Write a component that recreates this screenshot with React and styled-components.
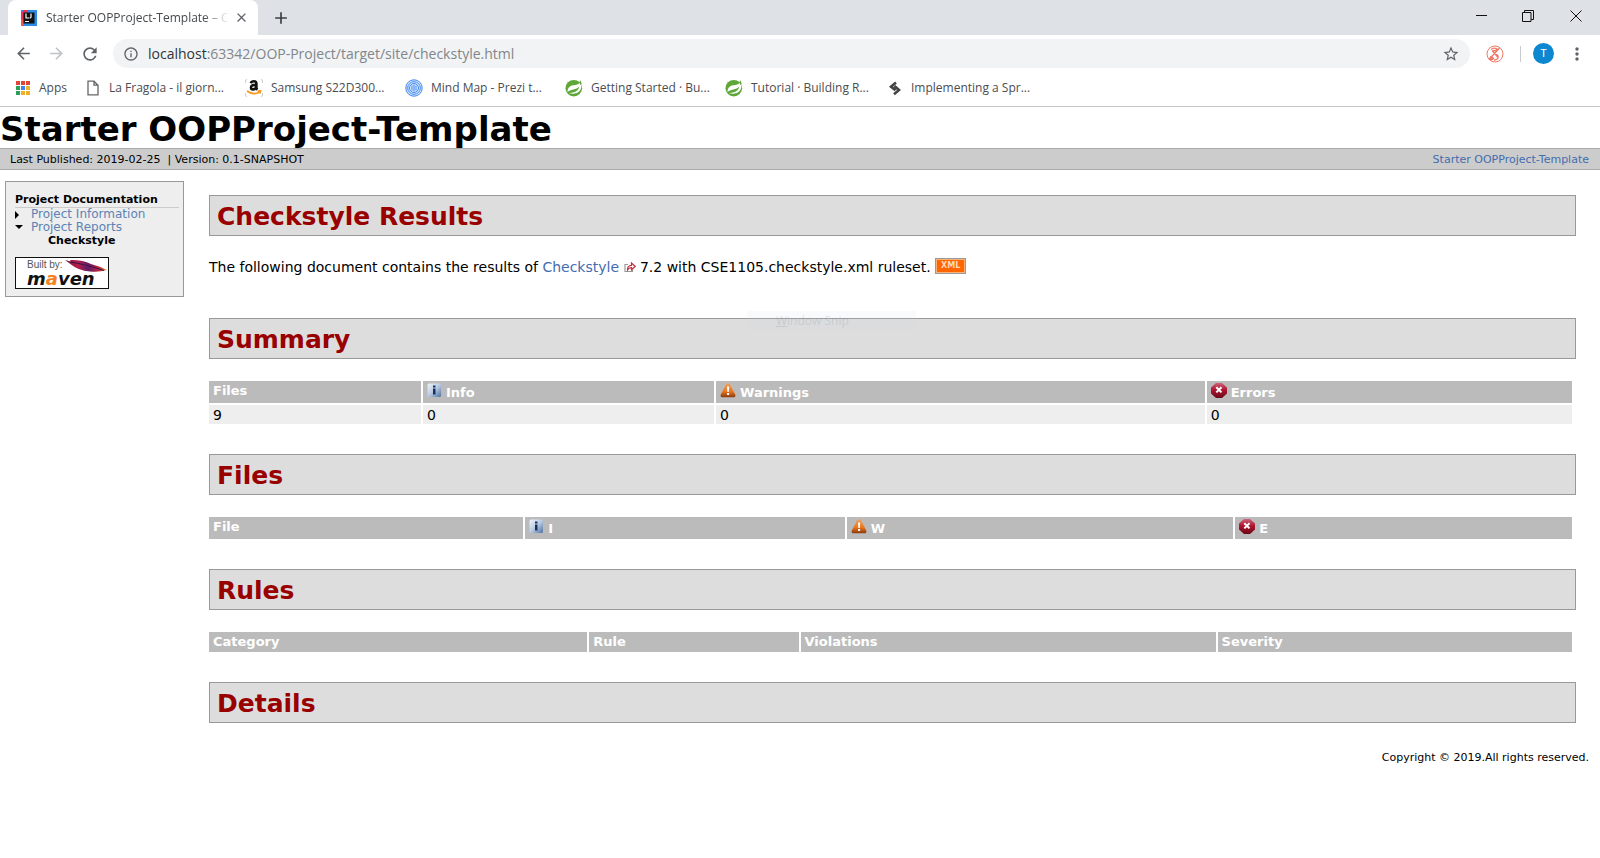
import React from 'react';
import styled, { createGlobalStyle } from 'styled-components';
import {
  MdArrowBack,
  MdArrowForward,
  MdRefresh,
  MdInfoOutline,
  MdStarBorder,
  MdMoreVert,
  MdClose,
  MdAdd,
} from 'react-icons/md';

const ui = '"Open Sans", "Noto Sans", sans-serif';
const doc = 'Verdana, "DejaVu Sans", sans-serif';

const GlobalStyle = createGlobalStyle`
  *, *::before, *::after { box-sizing: border-box; }
  body { margin: 0; background: #fff; font-family: ${doc}; color: #000; }
  a { text-decoration: none; }
  button { border: 0; padding: 0; background: none; font: inherit; }
  svg { display: block; flex: none; }
`;

/* ---------- browser frame ---------- */

const Browser = styled.header`
  font-family: ${ui};
  border-bottom: 1px solid #c4c5c7;
`;

const TabStrip = styled.div`
  display: flex;
  align-items: stretch;
  height: 35px;
  padding-left: 8px;
  background: #dee1e6;
`;

const Tab = styled.div`
  display: flex;
  align-items: center;
  width: 250px;
  padding: 0 9px 0 13px;
  border-radius: 8px 8px 0 0;
  background: #fff;
`;

const TabTitle = styled.span`
  flex: 1;
  min-width: 0;
  margin: 0 0 0 9px;
  white-space: nowrap;
  font-size: 12px;
  line-height: 18px;
  color: #45494d;
  mask-image: linear-gradient(90deg, #000 84%, transparent 98%);
`;

const IconButton = styled.button`
  display: flex;
  align-items: center;
  justify-content: center;
  width: ${(p) => p.$width || 24}px;
  color: ${(p) => p.$color || '#5f6368'};
`;

const WindowControls = styled.div`
  display: flex;
  margin-left: auto;
  padding-bottom: 4px;
`;

const Toolbar = styled.div`
  display: flex;
  align-items: center;
  height: 37px;
  padding: 0 11px 0 6px;
`;

const Omnibox = styled.form`
  display: flex;
  flex: 1;
  align-items: center;
  height: 29px;
  margin: 0 12px 0 6px;
  padding: 0 10px 0 10px;
  border-radius: 15px;
  background: #f1f3f4;
  color: #5f6368;
  font-size: 14px;
`;

const Host = styled.label`
  margin-left: 9px;
  color: #303438;
`;

const Address = styled.input`
  flex: 1;
  min-width: 0;
  padding: 0;
  border: 0;
  outline: 0;
  background: none;
  font: inherit;
  color: #80868b;
`;

const Divider = styled.span`
  width: 1px;
  height: 16px;
  margin: 0 12px 0 12px;
  background: #c8cacd;
`;

const Avatar = styled.button`
  width: 21px;
  height: 21px;
  margin-right: 11px;
  border-radius: 50%;
  background: #0d87d0;
  color: #fff;
  font: 11px/21px Roboto, sans-serif;
`;

const Bookmarks = styled.nav`
  display: flex;
  align-items: center;
  height: 34px;
  padding: 0 0 3px 15px;
`;

const Bookmark = styled.a`
  display: flex;
  align-items: center;
  width: ${(p) => p.$width}px;
  gap: 8px;
  font-size: 12px;
  line-height: 18px;
  white-space: nowrap;
  color: #4a4d51;
`;

/* ---------- project site ---------- */

const Banner = styled.h1`
  margin: 0;
  padding-top: 3px;
  font-size: 34px;
  line-height: 38px;
  font-weight: bold;
`;

const Crumbs = styled.div`
  display: flex;
  justify-content: space-between;
  padding: 1px 11px 0 10px;
  border: 1px solid #aaa;
  border-width: 1px 0;
  background: #ccc;
  font-size: 11px;
  line-height: 19px;
  white-space: pre;
`;

const SiteLink = styled.a`
  color: #446cb0;
`;

const Columns = styled.div`
  display: flex;
  align-items: flex-start;
  padding: 11px 24px 0 5px;
`;

const Sidebar = styled.nav`
  flex: none;
  width: 179px;
  margin-right: 25px;
  padding: 11px 4px 6px 9px;
  border: 1px solid #999;
  background: #eee;
  font-size: 12px;
`;

const SideTitle = styled.h5`
  margin: 0;
  border-bottom: 1px solid #ccc;
  font-size: 11px;
  line-height: 14px;
`;

const SideList = styled.ul`
  margin: 0 0 10px;
  padding: 0;
  list-style: none;
  line-height: 13px;
`;

const SideItem = styled.li`
  display: flex;
  align-items: center;
  gap: 8px;
`;

const CurrentItem = styled(SideItem)`
  padding-left: 33px;
  font-size: 11px;
  font-weight: bold;
`;

const SideLink = styled.a`
  color: #5c83b4;
`;

const Main = styled.main`
  flex: 1;
  min-width: 0;
  padding-top: 14px;
`;

const Section = styled.section`
  margin-bottom: ${(p) => p.$after || 30}px;
`;

const Heading = styled.h2`
  margin: 0 0 ${(p) => (p.$last ? 0 : 22)}px;
  padding: 2px 7px 0;
  border: 1px solid #999;
  background: #ddd;
  color: #900;
  font-size: 25px;
  line-height: 37px;
`;

const Intro = styled.p`
  margin: 0;
  font-size: 14px;
  line-height: 18px;
  svg { display: inline-block; vertical-align: -1px; }
`;

const XmlBadge = styled.a`
  display: inline-block;
  padding: 0 5px;
  border: 1px solid #999;
  outline: 1px solid #f9b27c;
  outline-offset: -2px;
  background: #f60;
  color: #ffd9b8;
  font-size: 8px;
  font-weight: bold;
  line-height: 14px;
  vertical-align: 4px;
`;

const DataTable = styled.table`
  width: calc(100% - 4px);
  table-layout: fixed;
  border-collapse: separate;
  border-spacing: 0;
  font-size: 14px;
  line-height: 17px;
  text-align: left;
`;

const HeadCell = styled.th`
  width: ${(p) => p.$width};
  height: ${(p) => (p.$tall ? 22 : 20)}px;
  padding: 1px 4px 0;
  border-right: 2px solid #fff;
  background: #bbb;
  color: #fff;
  font-size: 13px;
  vertical-align: top;
  &:last-child { border-right: 0; }
`;

const IconLabel = styled.span`
  display: flex;
  align-items: flex-start;
  gap: 4px;
  line-height: 21px;
  svg { margin-top: 1px; }
`;

const BodyCell = styled.td`
  height: 21px;
  padding: 1px 4px 0;
  border: solid #fff;
  border-width: 2px 2px 0 0;
  background: #eee;
  &:last-child { border-right: 0; }
`;

const Footer = styled.footer`
  padding: 0 11px 20px;
  font-size: 11px;
  line-height: 16px;
  text-align: right;
`;

/* Fading remnant of a snipping menu, floating over the page. */
const SnipGhost = styled.div`
  position: absolute;
  top: 311px;
  left: 747px;
  width: 169px;
  padding-left: 29px;
  background: rgba(205, 215, 225, 0.12);
  color: rgba(120, 130, 140, 0.2);
  font: 12px/19px ${ui};
  u { text-decoration: underline; }
`;

/* ---------- drawings ---------- */

const IdeaIcon = () => (
  <svg width="16" height="16" viewBox="0 0 16 16">
    <path fill="#2a8de8" d="M0 0h16v16H0z" />
    <path fill="#e8315b" d="M0 3l3-3h4l-4 8-1 5-2-1z" />
    <path fill="#f0584c" d="M0 10l3-1v4l-1 3H0z" />
    <path fill="#111" d="M2.500 2.500h11v11h-11z" />
    <path fill="none" stroke="#fff" strokeWidth="1.200" d="M5 3.500v4.500h3M10 3.500v3.500q0 1-1.500 1M4 11.500h4" />
  </svg>
);

const AppsIcon = () => {
  const colors = ['#e0453a', '#e0453a', '#e0453a', '#2f9e58', '#3f83ee', '#efb02a', '#2f9e58', '#efb02a', '#efb02a'];
  return (
    <svg width="16" height="16" viewBox="0 0 16 16">
      {colors.map((c, i) => (
        <rect key={i} x={1 + (i % 3) * 5} y={1 + Math.floor(i / 3) * 5} width="4" height="4" fill={c} />
      ))}
    </svg>
  );
};

const PageIcon = () => (
  <svg width="16" height="16" viewBox="0 0 16 16" fill="none" stroke="#666" strokeWidth="1.300">
    <path d="M3 1.200h6l4 4v9.600H3zM9 1.200v4h4" />
  </svg>
);

const AmazonIcon = () => (
  <svg width="18" height="18" viewBox="0 0 18 18">
    <path fill="none" stroke="#ccc" d="M.5 4V2Q.5.5 2 .5M16 .5q1.500 0 1.500 1.500v2M.5 14v2q0 1.500 1.500 1.500M16 17.500q1.500 0 1.500-1.500v-2" />
    <path fill="none" stroke="#111" strokeWidth="2.600" d="M5.800 4.300Q6.500 2.300 8.900 2.300 11.400 2.300 11.400 4.800V8.500q0 1.300 1 2.200M11.400 5.900Q6 5.700 6 8.500q0 1.900 1.900 1.900 2.500 0 3.400-2.400" />
    <path fill="none" stroke="#f79a1c" strokeWidth="1.800" d="M2 12q6 4.500 12.500 1.300M12.500 12.200l3-.2-.8 2.600" />
  </svg>
);

const PreziIcon = () => (
  <svg width="18" height="18" viewBox="0 0 18 18" fill="none" stroke="#3f86f0">
    <circle cx="9" cy="9" r="8.200" fill="#dceafe" />
    <circle cx="9" cy="9" r="6.300" />
    <circle cx="9" cy="9" r="4.500" />
    <path d="M7 6.500v5M9 5.500v7M11 6.500v5" />
  </svg>
);

const SpringIcon = () => (
  <svg width="18" height="18" viewBox="0 0 18 18">
    <circle cx="8.800" cy="9.200" r="8.300" fill="#5fa738" />
    <path fill="#fff" d="M16.800 1.500l-1.600 2c-1.500 2.300-4.200 2.300-7 2.800C4.500 7 2.300 9.500 2.600 13c1.500-1.500 3.400-2 5.600-2.500 2.600-.6 4.700-1.300 6.200-3.300-.6 3.300-2.700 5.200-5.600 6-1.400.4-3 .6-5 .8 3.200 1 6.500 1.100 8.900-.4 2.600-1.600 3.900-4.300 3.700-7.300z" />
    <path fill="#5fa738" d="M15.500 1.200l1.200 3.800-1.500 1-.8-3z" />
  </svg>
);

const DiamondIcon = () => (
  <svg width="16" height="16" viewBox="0 0 16 16" fill="none" stroke="#444" strokeWidth="2.600">
    <path d="M9 2.500L4 6.800l4.500 3.500M7.500 6l4.500 4-5 4.200" />
  </svg>
);

const BlockIcon = () => (
  <svg width="18" height="18" viewBox="0 0 18 18" fill="none" stroke="#f07a68">
    <circle cx="9" cy="9" r="8" />
    <path d="M5 4.500q3-2.500 6-.5l-1.500 2q-1.800-1-2.500 0-.5 1 2 2.300 4 2 3 4.700-1 2.200-4 2M13.500 3L3 14.500M6 5.500l6.500 7.500" strokeWidth="1.300" />
    <path fill="#f07a68" d="M3.500 14.500l1.500-3.500 3 2.500-2 1.500z" />
  </svg>
);

const InfoIcon = () => (
  <svg width="15" height="15" viewBox="0 0 15 15">
    <defs>
      <linearGradient id="infoFill" x1="0" y1="0" x2="1" y2="1">
        <stop offset="0" stopColor="#f0f5fb" />
        <stop offset="0.500" stopColor="#b9cbe2" />
        <stop offset="1" stopColor="#4d70a3" />
      </linearGradient>
    </defs>
    <rect x="0.500" y="0.500" width="13.500" height="13.500" rx="1.500" fill="url(#infoFill)" />
    <path fill="#17305c" d="M6 2.500h2.500v2H6zM6 5.500h2.500v6H6z" />
  </svg>
);

const WarningIcon = () => (
  <svg width="16" height="15" viewBox="0 0 16 15">
    <defs>
      <linearGradient id="warnFill" x1="0" y1="0" x2="0" y2="1">
        <stop offset="0" stopColor="#f2a35e" />
        <stop offset="0.600" stopColor="#e8761e" />
        <stop offset="1" stopColor="#8a3a0c" />
      </linearGradient>
    </defs>
    <path fill="url(#warnFill)" d="M8 0q1.300 0 2 1.500l5 9.500q1.200 3-.8 3.200H1.800Q-.2 14 1 11l5-9.500Q6.700 0 8 0z" />
    <path fill="#fff" d="M7 3.500h2.200L8.800 9H7.400zM7.100 10h2v2h-2z" />
  </svg>
);

const ErrorIcon = () => (
  <svg width="16" height="15" viewBox="0 0 16 15">
    <defs>
      <linearGradient id="errFill" x1="0" y1="0" x2="0" y2="1">
        <stop offset="0" stopColor="#cf6379" />
        <stop offset="0.450" stopColor="#ae1631" />
        <stop offset="1" stopColor="#6c0716" />
      </linearGradient>
    </defs>
    <path fill="url(#errFill)" d="M5 0h6l5 4.500v6L11 15H5L0 10.500v-6z" />
    <path stroke="#fff" strokeWidth="2" d="M5.300 4.200l5.200 5.200M10.500 4.200L5.300 9.400" />
  </svg>
);

const ExternalIcon = () => (
  <svg width="12" height="11" viewBox="0 0 12 11" fill="none">
    <path stroke="#999" strokeWidth="1.200" d="M4 2.500H1v7h7.500V7.500" />
    <path fill="#fff" stroke="#c22e3c" strokeWidth="1.200" d="M3.500 8q-.3-4.500 4-4.700V1l3.700 3.400L7.500 7.800V5.700Q5 5.600 3.500 8z" />
  </svg>
);

const MavenBadge = () => (
  <svg width="94" height="33" viewBox="0 0 94 33" role="img" aria-label="Built by Maven">
    <defs>
      <linearGradient id="feather" x1="0" y1="0" x2="1" y2="0">
        <stop offset="0" stopColor="#7a1a3c" />
        <stop offset="0.300" stopColor="#b81f48" />
        <stop offset="0.550" stopColor="#5f1d66" />
        <stop offset="0.800" stopColor="#c3233c" />
        <stop offset="1" stopColor="#d8a13a" />
      </linearGradient>
    </defs>
    <rect x="0.500" y="0.500" width="93" height="31" fill="#fff" stroke="#111" />
    <text x="12" y="11" fontFamily="Liberation Sans, sans-serif" fontSize="10" fill="#555">Built by:</text>
    <path fill="url(#feather)" d="M50 3l6 1.500-1-1.500q12-.5 21 4 8 2 16 6-8 2.500-17 1.500-12-1-19-7z" />
    <path fill="none" stroke="#35154a" strokeWidth="1.200" d="M55 5q14 2 34 8.500" />
    <text x="12" y="28" fontFamily="DejaVu Sans, sans-serif" fontSize="18" fontWeight="bold" fontStyle="italic" fill="#111">
      m<tspan fill="#f58220">a</tspan>ven
    </text>
  </svg>
);

const Arrow = ({ open }) => (
  <svg width="8" height="9" viewBox="0 0 8 9">
    <path d={open ? 'M0 2h8L4 6z' : 'M0 1l4 4-4 4z'} />
  </svg>
);

/* ---------- content ---------- */

const severityIcons = { info: InfoIcon, warning: WarningIcon, error: ErrorIcon };

const bookmarks = [
  { label: 'Apps', icon: AppsIcon, width: 70 },
  { label: 'La Fragola - il giorn...', icon: PageIcon, width: 160 },
  { label: 'Samsung S22D300...', icon: AmazonIcon, width: 160 },
  { label: 'Mind Map - Prezi t...', icon: PreziIcon, width: 160 },
  { label: 'Getting Started · Bu...', icon: SpringIcon, width: 160 },
  { label: 'Tutorial · Building R...', icon: SpringIcon, width: 162 },
  { label: 'Implementing a Spr...', icon: DiamondIcon, width: 160 },
];

function ReportTable({ columns, rows = [] }) {
  const tall = columns.some((c) => c.icon);
  return (
    <DataTable>
      <thead>
        <tr>
          {columns.map(({ label, icon, width }) => {
            const Icon = severityIcons[icon];
            return (
              <HeadCell key={label} scope="col" $width={width} $tall={tall}>
                {Icon ? <IconLabel><Icon />{label}</IconLabel> : label}
              </HeadCell>
            );
          })}
        </tr>
      </thead>
      {rows.length > 0 && (
        <tbody>
          {rows.map((row, r) => (
            <tr key={r}>{row.map((value, i) => <BodyCell key={i}>{value}</BodyCell>)}</tr>
          ))}
        </tbody>
      )}
    </DataTable>
  );
}

const summaryColumns = [
  { label: 'Files', width: '15.700%' },
  { label: 'Info', icon: 'info', width: '21.500%' },
  { label: 'Warnings', icon: 'warning', width: '36%' },
  { label: 'Errors', icon: 'error' },
];

const fileColumns = [
  { label: 'File', width: '23.200%' },
  { label: 'I', icon: 'info', width: '23.600%' },
  { label: 'W', icon: 'warning', width: '28.500%' },
  { label: 'E', icon: 'error' },
];

const ruleColumns = [
  { label: 'Category', width: '27.900%' },
  { label: 'Rule', width: '15.500%' },
  { label: 'Violations', width: '30.600%' },
  { label: 'Severity' },
];

export default function App() {
  return (
    <>
      <GlobalStyle />
      <Browser>
        <TabStrip>
          <Tab>
            <IdeaIcon />
            <TabTitle>Starter OOPProject-Template – Ch</TabTitle>
            <IconButton $width={16} aria-label="Close tab"><MdClose size={15} /></IconButton>
          </Tab>
          <IconButton $width={46} $color="#3c4043" aria-label="New tab"><MdAdd size={20} /></IconButton>
          <WindowControls>
            <IconButton $width={47} $color="#111" aria-label="Minimize">
              <svg width="12" height="12"><path d="M0 5.500h11" stroke="currentColor" /></svg>
            </IconButton>
            <IconButton $width={46} $color="#111" aria-label="Restore">
              <svg width="12" height="12" fill="none" stroke="currentColor"><path d="M.5 2.500h8.500v9H.5zM2.500 2.500v-2h9v9H9" /></svg>
            </IconButton>
            <IconButton $width={49} $color="#111" aria-label="Close">
              <svg width="12" height="12"><path d="M.5.5l11 11M11.500.5l-11 11" stroke="currentColor" /></svg>
            </IconButton>
          </WindowControls>
        </TabStrip>
        <Toolbar>
          <IconButton $width={34} aria-label="Back"><MdArrowBack size={19} /></IconButton>
          <IconButton $width={33} $color="#c0c2c5" aria-label="Forward"><MdArrowForward size={19} /></IconButton>
          <IconButton $width={34} aria-label="Reload"><MdRefresh size={20} /></IconButton>
          <Omnibox>
            <MdInfoOutline size={16} />
            <Host htmlFor="address">localhost</Host>
            <Address id="address" defaultValue=":63342/OOP-Project/target/site/checkstyle.html" />
            <IconButton $width={18} type="button" aria-label="Bookmark this page"><MdStarBorder size={18} /></IconButton>
          </Omnibox>
          <IconButton $width={26} aria-label="Extension"><BlockIcon /></IconButton>
          <Divider />
          <Avatar>T</Avatar>
          <IconButton $width={24} aria-label="Menu"><MdMoreVert size={20} /></IconButton>
        </Toolbar>
        <Bookmarks>
          {bookmarks.map(({ label, icon: Icon, width }) => (
            <Bookmark key={label} href="#" $width={width}><Icon />{label}</Bookmark>
          ))}
        </Bookmarks>
      </Browser>

      <Banner>Starter OOPProject-Template</Banner>
      <Crumbs>
        <span>Last Published: 2019-02-25{'  '}| Version: 0.1-SNAPSHOT</span>
        <SiteLink href="#">Starter OOPProject-Template</SiteLink>
      </Crumbs>

      <Columns>
        <Sidebar>
          <SideTitle>Project Documentation</SideTitle>
          <SideList>
            <SideItem><Arrow /><SideLink href="#">Project Information</SideLink></SideItem>
            <SideItem><Arrow open /><SideLink href="#">Project Reports</SideLink></SideItem>
            <CurrentItem>Checkstyle</CurrentItem>
          </SideList>
          <a href="#"><MavenBadge /></a>
        </Sidebar>

        <Main>
          <Section $after={42}>
            <Heading>Checkstyle Results</Heading>
            <Intro>
              The following document contains the results of <SiteLink href="#">Checkstyle</SiteLink>{' '}
              <ExternalIcon /> 7.2 with CSE1105.checkstyle.xml ruleset.{' '}
              <XmlBadge href="#">XML</XmlBadge>
            </Intro>
          </Section>
          <Section>
            <Heading>Summary</Heading>
            <ReportTable columns={summaryColumns} rows={[[9, 0, 0, 0]]} />
          </Section>
          <Section>
            <Heading>Files</Heading>
            <ReportTable columns={fileColumns} />
          </Section>
          <Section>
            <Heading>Rules</Heading>
            <ReportTable columns={ruleColumns} />
          </Section>
          <Section $after={27}>
            <Heading $last>Details</Heading>
          </Section>
        </Main>
      </Columns>
      <Footer>Copyright © 2019.All rights reserved.</Footer>
      <SnipGhost aria-hidden="true"><u>W</u>indow Snip</SnipGhost>
    </>
  );
}
